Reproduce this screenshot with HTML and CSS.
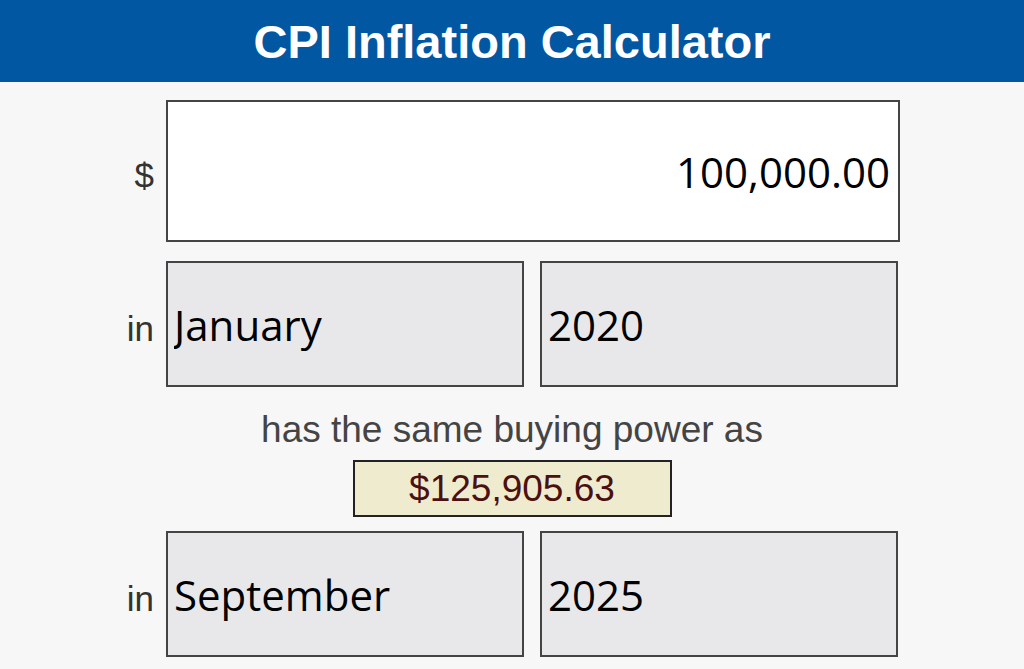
FILE: index.html
```html
<!DOCTYPE html>
<html lang="en">
<head>
    <meta charset="UTF-8">
    <title>CPI Inflation Calculator</title>
    <link rel="stylesheet" href="styles.css">
</head>
<body>
    <header class="top-bar">
        <h1>CPI Inflation Calculator</h1>
    </header>

    <main class="calc">
        <div class="row">
            <label class="tag" for="amount">$</label>
            <input id="amount" class="amount" type="text" value="100,000.00">
        </div>

        <div class="row from">
            <span class="tag">in</span>
            <div class="pair">
                <select class="pick">
                    <option selected>January</option>
                    <option>February</option>
                </select>
                <select class="pick">
                    <option selected>2020</option>
                    <option>2021</option>
                </select>
            </div>
        </div>

        <p class="same">has the same buying power as</p>
        <div class="result">$125,905.63</div>

        <div class="row to">
            <span class="tag">in</span>
            <div class="pair">
                <select class="pick">
                    <option selected>September</option>
                    <option>August</option>
                </select>
                <select class="pick">
                    <option selected>2025</option>
                    <option>2024</option>
                </select>
            </div>
        </div>
    </main>
</body>
</html>
```

FILE: styles.css
```css
body{
    margin: 0;
    background-color: #f7f7f7;
    font-family: "Liberation Sans", Arial, sans-serif;
    color: #444;
}

.top-bar{
    background-color: #0257a2;
    height: 82px;
    display: flex;
    justify-content: center;
    align-items: center;
}

.top-bar h1{
    margin: 0;
    color: #fff;
    font-size: 47px;
    font-weight: 700;
}

.calc{
    width: 776px;
    margin: 0 auto;
    padding-top: 18px;
    display: flex;
    flex-direction: column;
    align-items: center;
}

.row{
    display: grid;
    grid-template-columns: 30px 734px;
    column-gap: 12px;
    align-items: center;
}

.row.from{
    margin-top: 19px;
}

.row.to{
    margin-top: 14px;
}

.tag{
    justify-self: end;
    padding-top: 9px;
    font-size: 35px;
    color: #333;
}

.amount{
    box-sizing: border-box;
    width: 734px;
    height: 142px;
    margin: 0;
    border: 2px solid #444;
    background: #fff;
    padding: 0 8px;
    text-align: right;
    font-family: "Open Sans", sans-serif;
    font-size: 42px;
    color: #000;
}

.pair{
    display: grid;
    grid-template-columns: 358px 358px;
    column-gap: 16px;
}

.pick{
    appearance: none;
    -webkit-appearance: none;
    box-sizing: border-box;
    height: 126px;
    margin: 0;
    border: 2px solid #444;
    border-radius: 0;
    background: #e8e8ea;
    padding: 0 6px;
    font-family: "Open Sans", sans-serif;
    font-size: 42px;
    color: #000;
}

.same{
    margin: 22px 0 0;
    text-align: center;
    font-size: 37px;
    line-height: 41px;
}

.result{
    box-sizing: border-box;
    width: 319px;
    height: 57px;
    margin-top: 10px;
    border: 2px solid #222;
    background-color: #efebcf;
    color: #4b1010;
    font-size: 37px;
    display: flex;
    justify-content: center;
    align-items: center;
}
```
